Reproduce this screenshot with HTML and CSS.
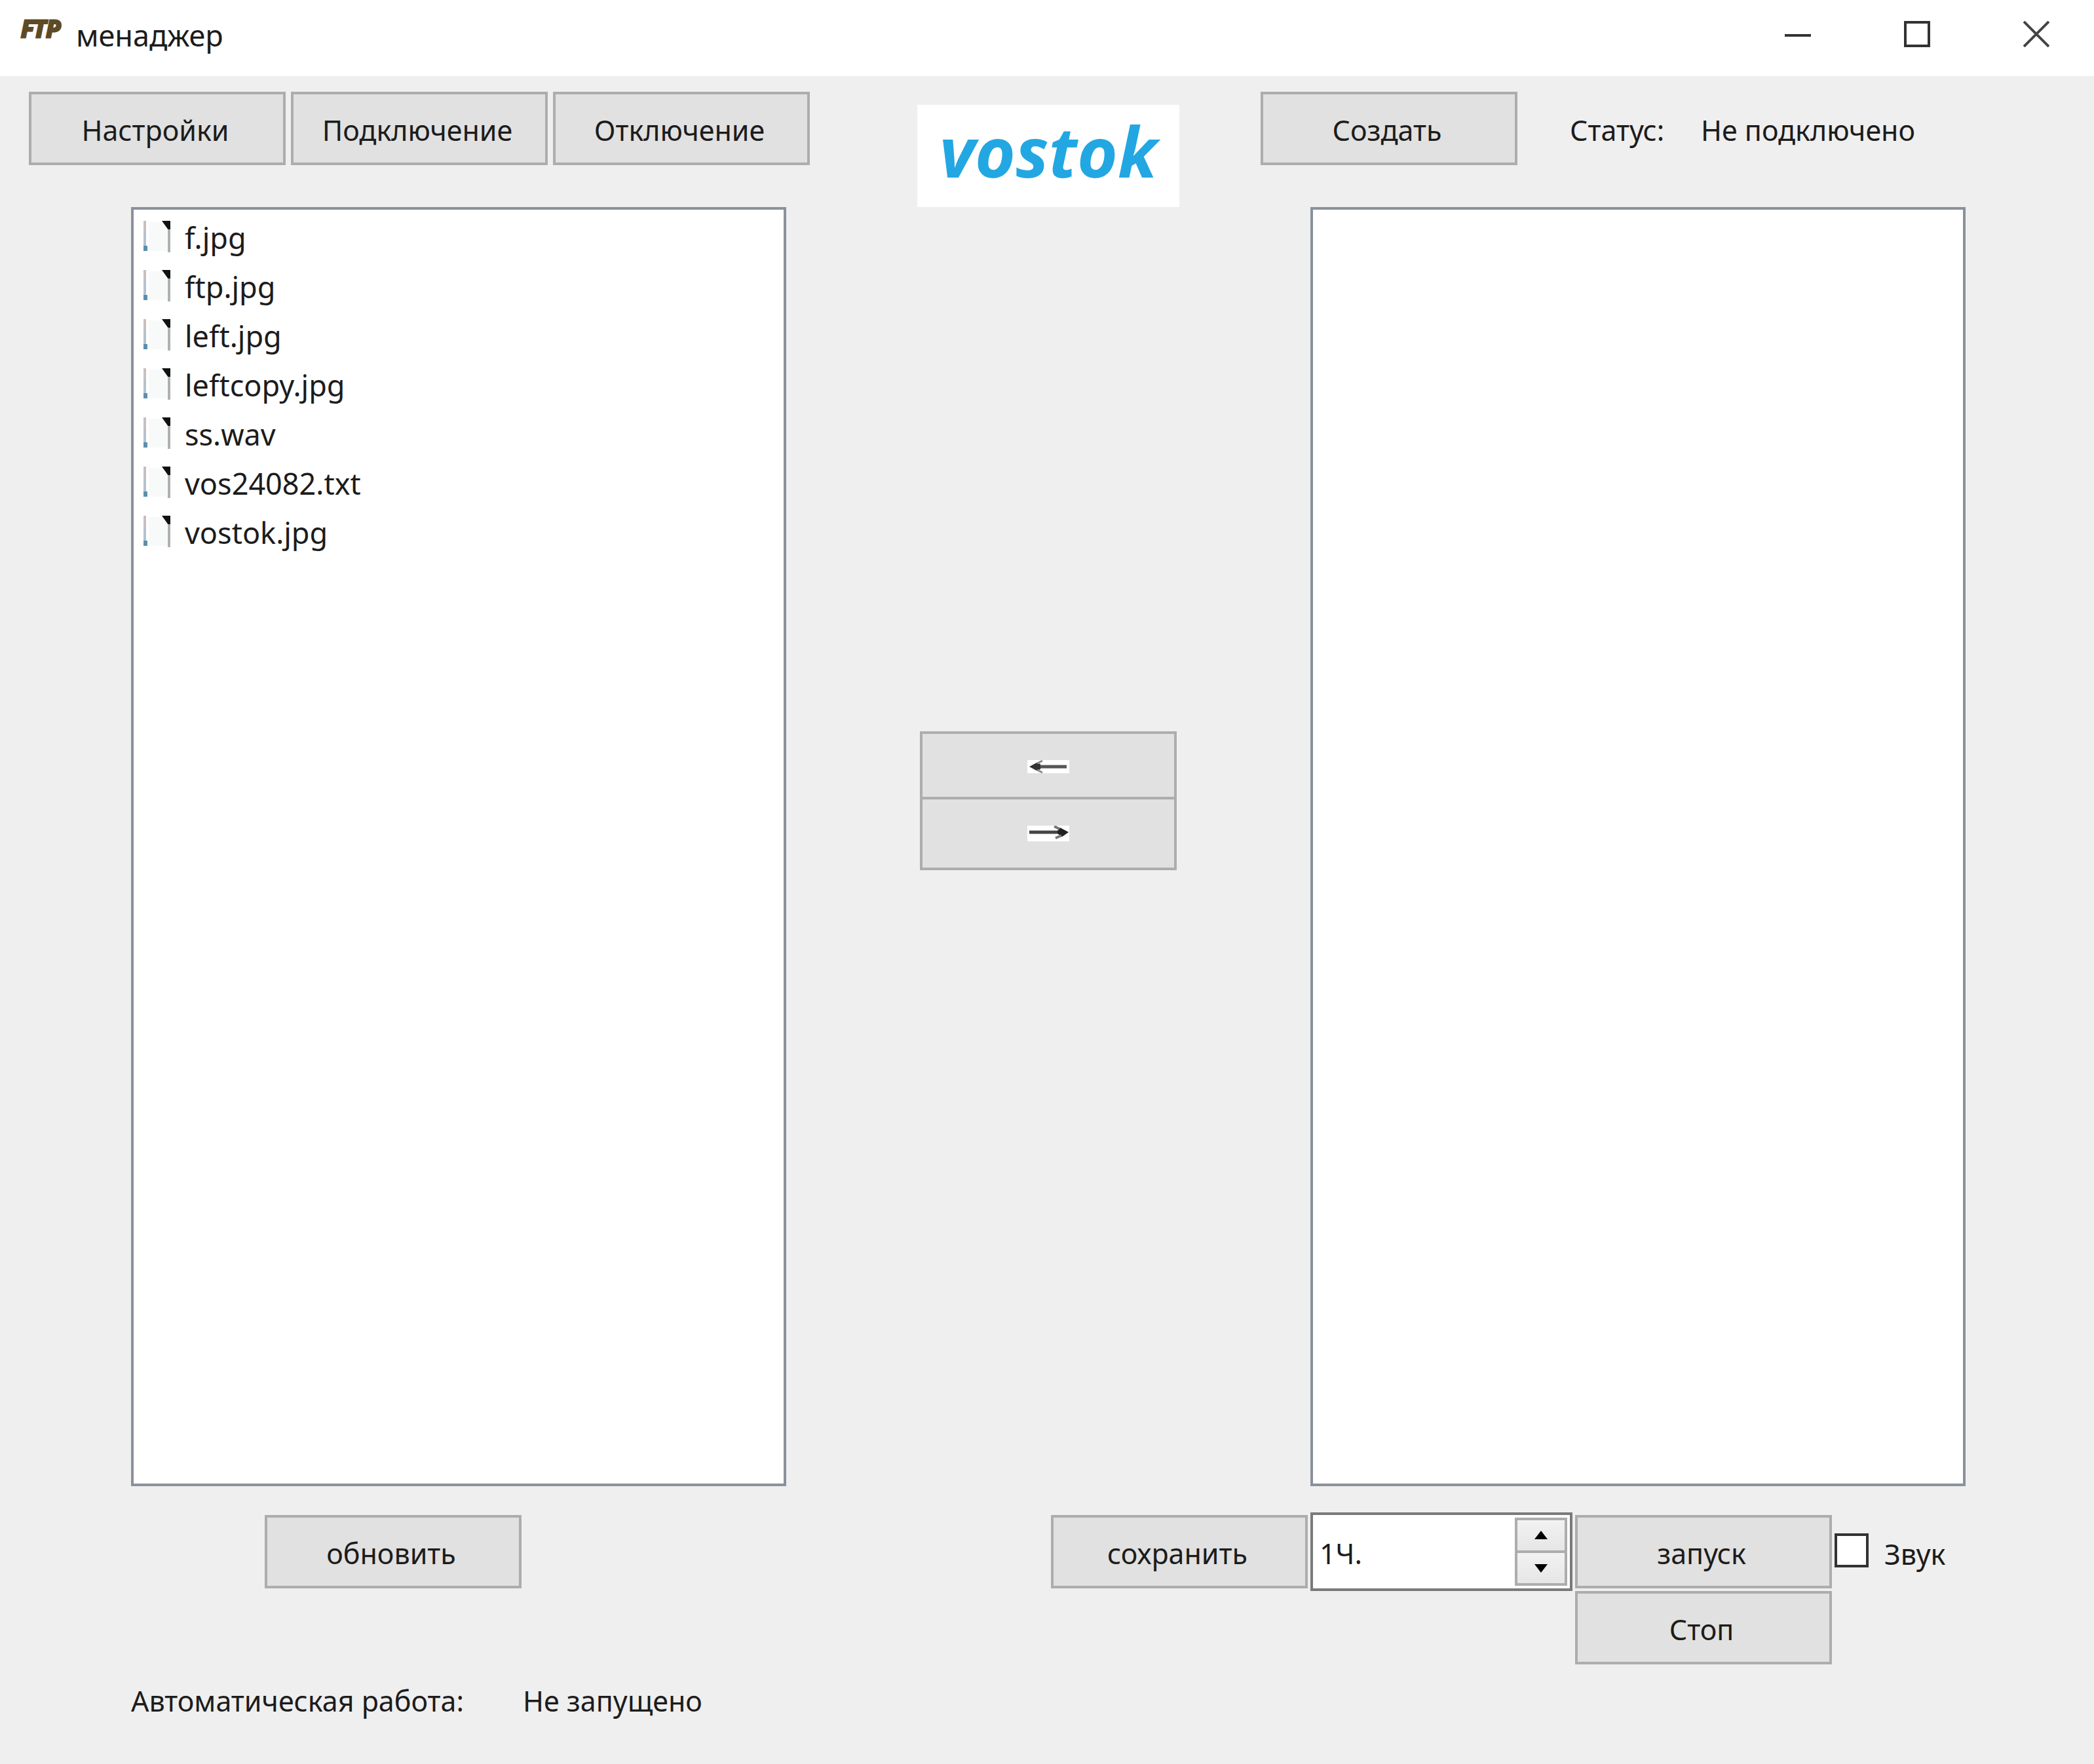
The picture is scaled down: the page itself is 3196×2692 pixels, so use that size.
FILE: index.html
```html
<!DOCTYPE html>
<html lang="ru">
<head>
<meta charset="utf-8">
<meta name="viewport" content="width=device-width, initial-scale=1">
<title>FTP менаджер</title>
<link rel="stylesheet" href="styles.css">
</head>
<body>
<svg class="sprite" aria-hidden="true">
  <symbol id="file" viewBox="0 0 44 48">
    <rect x="9" y="2" width="28" height="44" fill="#f8f9f9"/>
    <rect x="1" y="0" width="4" height="22" fill="#c8bfc1"/>
    <rect x="1" y="18" width="4" height="22" fill="#b4c2cd"/>
    <rect x="1" y="38" width="6" height="8" fill="#5b8fae"/>
    <path d="M29 0H42V14H39Z" fill="#111"/>
    <rect x="38" y="13" width="4" height="35" fill="#b0b0b0"/>
  </symbol>
</svg>

<header class="titlebar">
  <span class="app-mark">FTP</span>
  <h1 class="title">менаджер</h1>
  <div class="window-controls">
    <button class="window-button" type="button" aria-label="Свернуть">
      <svg viewBox="0 0 40 40"><path d="M0 22H40" stroke="#333" stroke-width="4"/></svg>
    </button>
    <button class="window-button" type="button" aria-label="Развернуть">
      <svg viewBox="0 0 40 40"><rect x="2" y="2" width="36" height="36" fill="none" stroke="#333" stroke-width="4"/></svg>
    </button>
    <button class="window-button" type="button" aria-label="Закрыть">
      <svg viewBox="0 0 40 40"><path d="M1 1L39 39M39 1L1 39" stroke="#444" stroke-width="4"/></svg>
    </button>
  </div>
</header>

<div class="toolbar">
  <div class="toolbar-left">
    <button class="button" type="button">Настройки</button>
    <button class="button" type="button">Подключение</button>
    <button class="button" type="button">Отключение</button>
  </div>
  <div class="logo">vostok</div>
  <div class="toolbar-right">
    <button class="button" type="button">Создать</button>
    <p class="status"><span class="status-label">Статус:</span><span>Не подключено</span></p>
  </div>
</div>

<main class="panels">
  <ul class="file-list">
    <li class="file"><svg class="file-icon"><use href="#file"/></svg><span>f.jpg</span></li>
    <li class="file"><svg class="file-icon"><use href="#file"/></svg><span>ftp.jpg</span></li>
    <li class="file"><svg class="file-icon"><use href="#file"/></svg><span>left.jpg</span></li>
    <li class="file"><svg class="file-icon"><use href="#file"/></svg><span>leftcopy.jpg</span></li>
    <li class="file"><svg class="file-icon"><use href="#file"/></svg><span>ss.wav</span></li>
    <li class="file"><svg class="file-icon"><use href="#file"/></svg><span>vos24082.txt</span></li>
    <li class="file"><svg class="file-icon"><use href="#file"/></svg><span>vostok.jpg</span></li>
  </ul>
  <div class="transfer">
    <button class="button transfer-button" type="button" aria-label="Скачать">
      <svg viewBox="0 0 64 24"><rect width="64" height="20" fill="#fff"/><path d="M12 10H60" stroke="#555" stroke-width="5"/><path d="M3 10L14 4 20 6V14L14 16Z" fill="#333"/><path d="M15 5L23 1M15 15L23 19" stroke="#888" stroke-width="3"/></svg>
    </button>
    <button class="button transfer-button" type="button" aria-label="Загрузить">
      <svg viewBox="0 0 64 24"><rect width="64" height="24" fill="#fff"/><path d="M3 10H54" stroke="#444" stroke-width="5"/><path d="M63 10L50 3 46 8V12L53 17Z" fill="#222"/><path d="M49 5L41 1M52 15L43 19" stroke="#777" stroke-width="4"/></svg>
    </button>
  </div>
  <ul class="file-list"></ul>
</main>

<footer class="bottom">
  <div class="bottom-left">
    <button class="button" type="button">обновить</button>
  </div>
  <div class="bottom-middle">
    <button class="button" type="button">сохранить</button>
  </div>
  <div class="bottom-right">
    <div class="spin">
      <input class="spin-input" type="text" value="1Ч." aria-label="Интервал">
      <div class="spin-buttons">
        <button class="spin-button" type="button" aria-label="Больше"><svg viewBox="0 0 22 14"><path d="M11 0L21 13H1Z"/></svg></button>
        <button class="spin-button" type="button" aria-label="Меньше"><svg viewBox="0 0 22 14"><path d="M11 14L21 1H1Z"/></svg></button>
      </div>
    </div>
    <div class="run-buttons">
      <button class="button" type="button">запуск</button>
      <button class="button" type="button">Стоп</button>
    </div>
    <label class="sound"><input class="sound-box" type="checkbox"><span>Звук</span></label>
  </div>
</footer>

<p class="auto-status"><span class="auto-label">Автоматическая работа:</span><span>Не запущено</span></p>
</body>
</html>
```
FILE: styles.css
```css
* {
  box-sizing: border-box;
}

body {
  display: flex;
  flex-direction: column;
  min-height: 100vh;
  margin: 0;
  background: #efefef;
  color: #1c1c1c;
  font: 43px/60px "Noto Sans", "Open Sans", sans-serif;
}

h1, p, ul {
  margin: 0;
  padding: 0;
}

button, input {
  margin: 0;
  color: inherit;
  font: inherit;
}

svg {
  display: block;
}

.sprite {
  display: none;
}

/* Title bar */
.titlebar {
  display: flex;
  align-items: flex-start;
  height: 116px;
  padding-left: 32px;
  background: #fff;
}

.app-mark {
  width: 64px;
  margin-right: 20px;
  padding-top: 20px;
  color: #5e4a25;
  font: italic 700 36px/48px "Open Sans", sans-serif;
  -webkit-text-stroke: 3px #5e4a25;
}

.title {
  padding-top: 24px;
  font: inherit;
  font-size: 45px;
}

.window-controls {
  display: flex;
  gap: 6px;
  margin-left: auto;
}

.window-button {
  display: flex;
  align-items: center;
  justify-content: center;
  width: 176px;
  height: 104px;
  padding: 0;
  border: 0;
  background: none;
}

.window-button svg {
  width: 40px;
  height: 40px;
}

/* Shared push button */
.button {
  width: 392px;
  height: 112px;
  padding: 6px 6px 0 0;
  border: 4px solid #adadad;
  background: #e1e1e1;
}

/* Toolbar */
.toolbar {
  display: grid;
  grid-template-columns: 1fr 400px 1fr;
  align-items: start;
  padding: 24px 40px 0 44px;
}

.toolbar-left {
  display: flex;
  gap: 8px;
}

.toolbar-right {
  display: flex;
  align-items: center;
  padding-left: 124px;
}

.logo {
  height: 156px;
  margin-top: 20px;
  background: #fff;
  color: #22a7e2;
  font: italic 700 106px/140px "Noto Sans", sans-serif;
  text-align: center;
}

.status {
  display: flex;
  padding: 6px 0 0 80px;
  white-space: nowrap;
}

.status-label {
  width: 200px;
}

/* File panels */
.panels {
  display: grid;
  flex: 1;
  grid-template-columns: 5fr 4fr 5fr;
  padding: 0 196px 0 200px;
}

.file-list {
  padding-top: 3px;
  border: 4px solid #8a919c;
  background: #fff;
  font-size: 45px;
  list-style: none;
}

.file {
  display: flex;
  align-items: center;
  gap: 20px;
  height: 75px;
  padding-left: 14px;
}

.file span {
  padding-top: 4px;
}

.file-icon {
  width: 44px;
  height: 48px;
}

.transfer {
  display: flex;
  flex-direction: column;
  align-items: center;
  padding-top: 800px;
}

.transfer-button {
  display: flex;
  align-items: center;
  justify-content: center;
  padding: 0;
}

.transfer-button + .transfer-button {
  margin-top: -12px;
}

.transfer-button svg {
  width: 64px;
}

/* Bottom controls */
.bottom {
  display: grid;
  grid-template-columns: 5fr 4fr 5fr;
  padding: 40px 196px 0 200px;
}

.bottom-left {
  padding: 4px 0 0 204px;
}

.bottom-middle {
  display: flex;
  justify-content: flex-end;
  align-items: flex-start;
  padding: 4px 4px 0 0;
}

.bottom-right {
  display: flex;
  align-items: flex-start;
  gap: 4px;
}

.spin {
  display: flex;
  width: 400px;
  height: 120px;
  padding: 4px;
  border: 4px solid #7a7a7a;
  background: #fff;
}

.spin-input {
  flex: 1;
  min-width: 0;
  padding: 6px 0 0 6px;
  border: 0;
  background: none;
  outline: 0;
}

.spin-buttons {
  display: flex;
  flex-direction: column;
  width: 80px;
}

.spin-button {
  display: flex;
  flex: 1;
  align-items: center;
  justify-content: center;
  padding: 0;
  border: 4px solid #adadad;
  background: linear-gradient(#f2f2f2, #e6e6e6);
}

.spin-button + .spin-button {
  margin-top: -4px;
}

.spin-button svg {
  width: 22px;
  height: 14px;
}

.run-buttons {
  display: flex;
  flex-direction: column;
  gap: 4px;
  padding-top: 4px;
}

.sound {
  display: flex;
  gap: 24px;
  padding-top: 32px;
}

.sound span {
  padding-top: 2px;
}

.sound-box {
  width: 52px;
  height: 52px;
  border: 4px solid #333;
  background: #fff;
  appearance: none;
}

/* Status line */
.auto-status {
  display: flex;
  padding: 26px 196px 66px 200px;
}

.auto-label {
  width: 598px;
}
```
